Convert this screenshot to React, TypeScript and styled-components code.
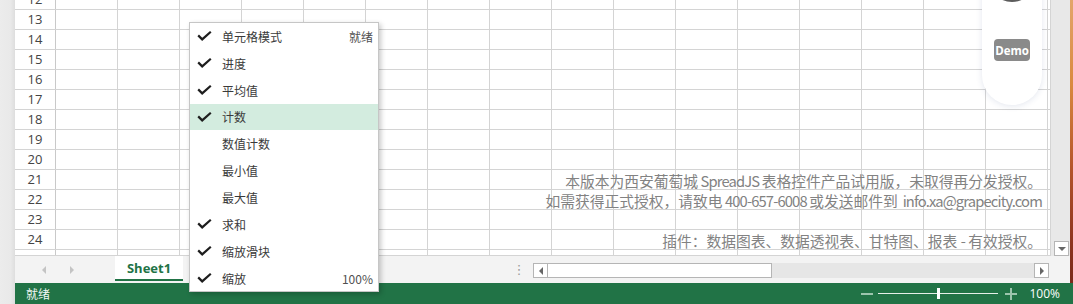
import styled, { createGlobalStyle } from 'styled-components';

const GlobalStyle = createGlobalStyle`
  html, body {
    margin: 0;
    padding: 0;
    background: #ebebeb;
  }
  body {
    font-family: "Noto Sans CJK SC", "Noto Sans", sans-serif;
  }
`;

const rows = [
  { n: '12', h: 10, align: 'flex-end' },
  ...Array.from({ length: 12 }, (_, i) => ({ n: String(13 + i), h: 20, align: 'center' })),
  { n: '', h: 6, align: 'flex-start' },
];

const menuItems = [
  { label: '单元格模式', checked: true, value: '就绪' },
  { label: '进度', checked: true },
  { label: '平均值', checked: true },
  { label: '计数', checked: true, active: true },
  { label: '数值计数' },
  { label: '最小值' },
  { label: '最大值' },
  { label: '求和', checked: true },
  { label: '缩放滑块', checked: true },
  { label: '缩放', checked: true, value: '100%' },
];

function Check() {
  return (
    <svg width='15' height='10' viewBox='0 0 15 10'>
      <path d='M1.2 4.4 L5.2 8.4 L13.8 0.8' fill='none' stroke='#1e1e1e' strokeWidth='2.2' />
    </svg>
  );
}

function App() {
  return (
    <Page>
      <GlobalStyle />
      <Gutter />
      <Workbook>
        <Main>
          <SheetArea>
            <Viewport>
              <Rows>
                {rows.map((r, idx) => (
                  <Row key={idx} $h={r.h}>
                    <RowHeader $align={r.align}>
                      {r.n && <span>{r.n}</span>}
                    </RowHeader>
                    {Array.from({ length: 16 }, (_, i) => (
                      <Cell key={i} />
                    ))}
                    <Cell $partial />
                  </Row>
                ))}
              </Rows>
              <VScroll>
                <ScrollBtn>
                  <Arrow $dir='down' />
                </ScrollBtn>
              </VScroll>

              <Watermark>
                <p>
                  本版本为西安葡萄城<Latin> SpreadJS </Latin>表格控件产品试用版，未取得再分发授权。
                </p>
                <p>
                  如需获得正式授权，请致电<Latin> 400-657-6008 </Latin>或发送邮件到
                  <Latin>&nbsp; info.xa@grapecity.com</Latin>
                </p>
                <p>&nbsp;</p>
                <p>
                  插件：数据图表、数据透视表、甘特图、报表 <Latin>-</Latin> 有效授权。
                </p>
              </Watermark>
            </Viewport>

            <TabBar>
              <TabNav>
                <NavArrow $dir='left' />
                <NavArrow $dir='right' />
              </TabNav>
              <SheetTab>Sheet1</SheetTab>
              <Spacer />
              <Dots>⋮</Dots>
              <HScroll>
                <ScrollBtn>
                  <Arrow $dir='left' />
                </ScrollBtn>
                <Thumb />
                <Track />
                <ScrollBtn>
                  <Arrow $dir='right' />
                </ScrollBtn>
              </HScroll>
            </TabBar>
          </SheetArea>
          <EdgeStrip />
        </Main>

        <StatusBar>
          <StatusText>就绪</StatusText>
          <Zoom>
            <Minus />
            <Slider>
              <SliderThumb />
            </Slider>
            <Plus />
            <ZoomValue>100%</ZoomValue>
          </Zoom>
        </StatusBar>

        <DemoPill>
          <Avatar />
          <DemoBadge>Demo</DemoBadge>
        </DemoPill>

        <Menu>
          {menuItems.map((m) => (
            <MenuItem key={m.label} $active={!!m.active}>
              <CheckSlot>{m.checked && <Check />}</CheckSlot>
              <MenuLabel>{m.label}</MenuLabel>
              {m.value && <MenuValue>{m.value}</MenuValue>}
            </MenuItem>
          ))}
        </Menu>
      </Workbook>
    </Page>
  );
}

export default App;

const Page = styled.div`
  display: flex;
  width: 1073px;
  height: 304px;
  overflow: hidden;
  background: #ebebeb;
`;

const Gutter = styled.div`
  width: 15px;
  flex-shrink: 0;
  background: linear-gradient(to right, #ececec 0%, #e9e9e9 70%, #dedede 100%);
`;

const Workbook = styled.div`
  position: relative;
  flex: 1;
  display: flex;
  flex-direction: column;
`;

const Main = styled.div`
  display: flex;
  height: 283px;
`;

const SheetArea = styled.div`
  width: 1055px;
  display: flex;
  flex-direction: column;
`;

const Viewport = styled.div`
  position: relative;
  display: flex;
  height: 256px;
  background: #fff;
`;

const Rows = styled.div`
  width: 1036px;
  display: flex;
  flex-direction: column;
`;

const Row = styled.div<{ $h: number }>`
  display: flex;
  height: ${(p) => p.$h}px;
  box-sizing: border-box;
  border-bottom: 1px solid #d4d4d4;
  overflow: hidden;
`;

const RowHeader = styled.div<{ $align: string }>`
  width: 41px;
  flex-shrink: 0;
  box-sizing: border-box;
  border-right: 1px solid #c9c9c9;
  display: flex;
  align-items: ${(p) => p.$align};
  justify-content: center;
  overflow: hidden;
  font-family: "Open Sans", "Noto Sans", sans-serif;
  font-size: 13px;
  color: #444;

  span {
    display: block;
    height: 19px;
    line-height: 19px;
    flex-shrink: 0;
  }
`;

const Cell = styled.div<{ $partial?: boolean }>`
  width: ${(p) => (p.$partial ? 3 : 62)}px;
  flex-shrink: 0;
  box-sizing: border-box;
  border-right: 1px solid #d4d4d4;
`;

const VScroll = styled.div`
  width: 19px;
  background: #e8e8e8;
  display: flex;
  flex-direction: column;
  justify-content: flex-end;
  align-items: flex-end;
  padding-right: 1px;
  box-sizing: border-box;
`;

const ScrollBtn = styled.div`
  width: 15px;
  height: 15px;
  flex-shrink: 0;
  box-sizing: border-box;
  border: 1px solid #b5b5b5;
  background: #fff;
  display: flex;
  align-items: center;
  justify-content: center;
`;

const Arrow = styled.div<{ $dir: 'left' | 'right' | 'down' }>`
  width: 0;
  height: 0;
  ${(p) =>
    p.$dir === 'down'
      ? 'border-left: 4px solid transparent; border-right: 4px solid transparent; border-top: 4px solid #666;'
      : p.$dir === 'left'
      ? 'border-top: 4px solid transparent; border-bottom: 4px solid transparent; border-right: 4px solid #666;'
      : 'border-top: 4px solid transparent; border-bottom: 4px solid transparent; border-left: 4px solid #666;'}
`;

const Watermark = styled.div`
  position: absolute;
  right: 28px;
  top: 171px;
  text-align: right;
  font-family: "Noto Sans CJK SC", "Noto Sans", sans-serif;
  font-size: 14.75px;
  color: #828282;
  pointer-events: none;

  p {
    margin: 0;
    height: 20px;
    line-height: 20px;
    white-space: nowrap;
  }
`;

const Latin = styled.span`
  letter-spacing: -0.85px;
`;

const TabBar = styled.div`
  height: 27px;
  display: flex;
  background: #f3f3f3;
`;

const TabNav = styled.div`
  width: 100px;
  display: flex;
  align-items: center;
  gap: 24px;
  padding-left: 27px;
  box-sizing: border-box;
`;

const NavArrow = styled.div<{ $dir: 'left' | 'right' }>`
  width: 0;
  height: 0;
  margin-top: 1px;
  border-top: 4px solid transparent;
  border-bottom: 4px solid transparent;
  ${(p) => (p.$dir === 'left' ? 'border-right: 4px solid #c4c4c4;' : 'border-left: 4px solid #c4c4c4;')}
`;

const SheetTab = styled.div`
  width: 68px;
  height: 25px;
  box-sizing: border-box;
  background: #fff;
  border-bottom: 2px solid #217346;
  display: flex;
  align-items: center;
  justify-content: center;
  font-family: "Open Sans", "Liberation Sans", sans-serif;
  font-weight: bold;
  font-size: 13px;
  color: #217346;
`;

const Spacer = styled.div`
  flex: 1;
`;

const Dots = styled.div`
  width: 14px;
  margin-right: 7px;
  text-align: center;
  line-height: 27px;
  font-family: "DejaVu Sans", sans-serif;
  font-size: 13px;
  color: #9a9a9a;
`;

const HScroll = styled.div`
  width: 516px;
  height: 15px;
  margin-top: 7px;
  margin-right: 21px;
  display: flex;
`;

const Thumb = styled.div`
  width: 224px;
  box-sizing: border-box;
  border: 1px solid #b5b5b5;
  border-left: none;
  background: #fff;
`;

const Track = styled.div`
  flex: 1;
  background: #e6e6e6;
`;

const EdgeStrip = styled.div`
  width: 3px;
  background: linear-gradient(to bottom, #e3a56b 0%, #d9893f 30%, #b4532a 60%, #8e3520 85%, #7a2a1a 100%);
`;

const StatusBar = styled.div`
  height: 21px;
  display: flex;
  align-items: center;
  background: #217346;
  padding-left: 11px;
`;

const StatusText = styled.span`
  font-family: "Noto Sans CJK SC", sans-serif;
  font-size: 12px;
  color: #f2f7f4;
`;

const Zoom = styled.div`
  margin-left: auto;
  display: flex;
  align-items: center;
  padding-right: 13px;
`;

const Minus = styled.div`
  width: 12px;
  height: 2px;
  background: #9cc5ad;
`;

const Slider = styled.div`
  position: relative;
  width: 120px;
  height: 1px;
  margin-left: 5px;
  background: #e6efe9;
`;

const SliderThumb = styled.div`
  position: absolute;
  left: 59px;
  top: -5px;
  width: 3px;
  height: 11px;
  background: #fff;
`;

const Plus = styled.div`
  position: relative;
  width: 12px;
  height: 12px;
  margin-left: 7px;

  &::before,
  &::after {
    content: '';
    position: absolute;
    background: #9cc5ad;
  }
  &::before {
    left: 0;
    top: 5px;
    width: 12px;
    height: 2px;
  }
  &::after {
    left: 5px;
    top: 0;
    width: 2px;
    height: 12px;
  }
`;

const ZoomValue = styled.span`
  margin-left: 12px;
  font-family: "Open Sans", "Noto Sans", sans-serif;
  font-size: 12px;
  color: #fff;
`;

const DemoPill = styled.div`
  position: absolute;
  left: 967px;
  top: -60px;
  width: 60px;
  height: 165px;
  border-radius: 30px;
  background: #fff;
  box-shadow: 0 1px 6px rgba(40, 60, 120, 0.13);
  display: flex;
  flex-direction: column;
  align-items: center;
  justify-content: flex-end;
  padding-bottom: 44px;
  box-sizing: border-box;
  overflow: hidden;
`;

const Avatar = styled.div`
  width: 50px;
  height: 50px;
  border-radius: 50%;
  background: #5c5c5c;
  margin-bottom: 37px;
`;

const DemoBadge = styled.div`
  width: 36px;
  height: 22px;
  border-radius: 4px;
  background: #8a8a8a;
  color: #fff;
  display: flex;
  align-items: center;
  justify-content: center;
  font-family: "Open Sans", "Liberation Sans", sans-serif;
  font-weight: bold;
  font-size: 11.5px;
`;

const Menu = styled.div`
  position: absolute;
  left: 174px;
  top: 22px;
  width: 190px;
  box-sizing: border-box;
  border: 1px solid #c6c6c6;
  background: #fff;
  box-shadow: 2px 2px 5px rgba(0, 0, 0, 0.22);
  z-index: 10;
`;

const MenuItem = styled.div<{ $active: boolean }>`
  height: 26.85px;
  display: flex;
  align-items: center;
  padding: 0 5px 0 7px;
  background: ${(p) => (p.$active ? '#d3ecdf' : 'transparent')};
  font-family: "Noto Sans CJK SC", sans-serif;
  font-size: 12px;
  color: #3a3a3a;
`;

const CheckSlot = styled.div`
  width: 15px;
  height: 10px;
  margin-right: 10px;
  display: flex;
`;

const MenuLabel = styled.span`
  flex: 1;
`;

const MenuValue = styled.span`
  color: #505050;
`;
